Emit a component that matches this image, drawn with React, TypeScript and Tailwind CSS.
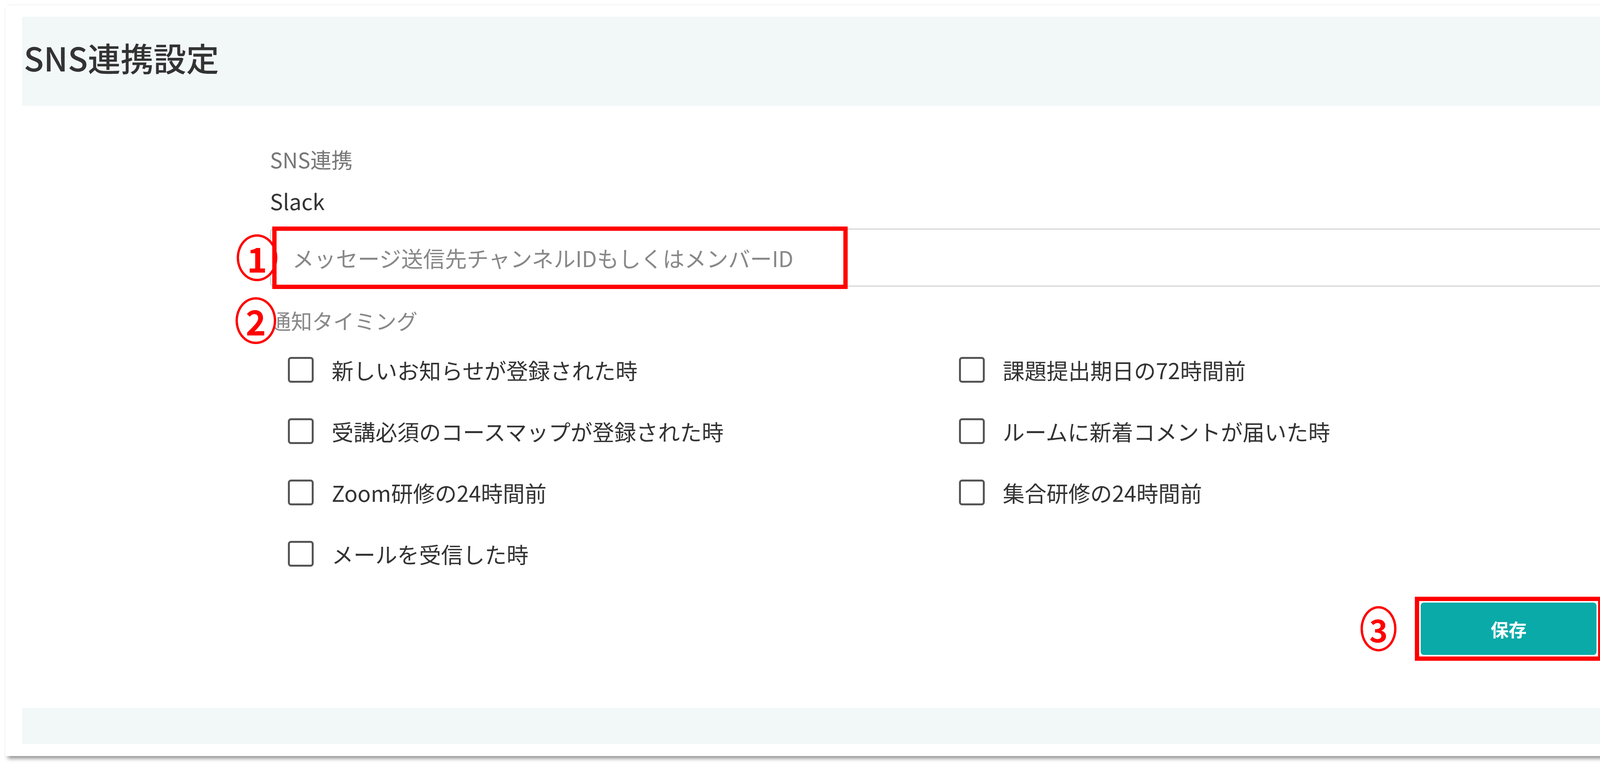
import React from 'react';

const font = { fontFamily: '"Noto Sans CJK JP", "Noto Sans", sans-serif' };

function Circled({ n }: { n: string }) {
  return (
    <span className="absolute left-[-88px] top-1/2 -translate-y-1/2 flex h-[120px] w-[104px] items-center justify-center rounded-[50%] border-[6px] border-[#ff0000] bg-white text-[88px] font-bold leading-none text-[#ff0000]">
      {n}
    </span>
  );
}

function Check({ label }: { label: string }) {
  return (
    <label className="flex h-[157px] items-center gap-[46px]">
      <span className="h-[66px] w-[66px] shrink-0 rounded-[8px] border-[5px] border-[#555]" />
      <span className="whitespace-nowrap text-[56px] text-[#333]">{label}</span>
    </label>
  );
}

export default function App() {
  const left = ['新しいお知らせが登録された時', '受講必須のコースマップが登録された時', 'Zoom研修の24時間前', 'メールを受信した時'];
  const right = ['課題提出期日の72時間前', 'ルームに新着コメントが届いた時', '集合研修の24時間前'];
  return (
    <div className="h-[1964px] w-full overflow-hidden bg-white p-[14px]" style={font}>
      <div className="flex h-[1922px] w-[4426px] flex-col overflow-hidden bg-white px-[43px] pt-[29px] shadow-[6px_6px_10px_rgba(0,0,0,0.45)]">
        <div className="flex h-[228px] shrink-0 items-center bg-[#f2f7f7] pl-[4px] pb-[20px]">
          <h1 className="text-[84px] font-medium text-[#333]">SNS連携設定</h1>
        </div>
        <div className="flex h-[1542px] shrink-0 flex-col pl-[634px] pr-[295px] pt-[100px]">
          <div className="text-[54px] leading-[74px] text-[#777]">SNS連携</div>
          <div className="mt-[32px] text-[56px] leading-[74px] text-[#333]">Slack</div>
          <div className="relative mt-[34px] h-[149px] rounded-[10px] border-[3px] border-[#d6d6d6]">
            <Circled n="1" />
            <div className="absolute left-[3px] top-[-8px] flex h-[160px] w-[1473px] items-center border-[11px] border-[#ff0000] pl-[40px] text-[56px] whitespace-nowrap text-[#888]">
              メッセージ送信先チャンネルIDもしくはメンバーID
            </div>
          </div>
          <div className="relative mt-[50px] text-[54px] leading-[74px] text-[#888]">
            <Circled n="2" />
            通知タイミング
          </div>
          <div className="mt-[10px] flex pl-[46px]">
            <div className="w-[1718px]">{left.map(l => <Check key={l} label={l} />)}</div>
            <div>{right.map(l => <Check key={l} label={l} />)}</div>
          </div>
          <div className="mt-[32px] flex justify-end">
            <div className="relative border-[11px] border-[#ff0000] bg-white p-[4px]">
              <span className="absolute left-[-150px] top-1/2 -translate-y-1/2 flex h-[116px] w-[92px] items-center justify-center rounded-[50%] border-[6px] border-[#ff0000] text-[80px] font-bold leading-none text-[#ff0000]">3</span>
              <button className="flex h-[134px] w-[450px] items-center justify-center rounded-[8px] bg-[#09aaa8] text-[46px] font-bold text-white">保存</button>
            </div>
          </div>
        </div>
        <div className="h-[92px] shrink-0 bg-[#f2f7f7]" />
      </div>
    </div>
  );
}
